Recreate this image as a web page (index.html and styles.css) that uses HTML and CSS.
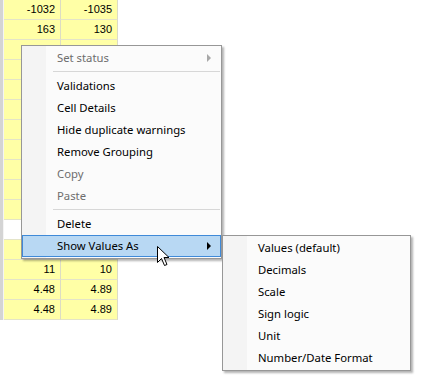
FILE: index.html
```html
<!DOCTYPE html>
<html lang="en">
<head>
<meta charset="UTF-8">
<title>Show Values As</title>
<link rel="stylesheet" href="styles.css">
</head>
<body>
    <div class="sheet">
        <div class="row-strip"></div>
        <div class="grid">
            <div class="cell">-1032</div><div class="cell">-1035</div>
            <div class="cell">163</div><div class="cell">130</div>
            <div class="cell"></div><div class="cell"></div>
            <div class="cell"></div><div class="cell"></div>
            <div class="cell"></div><div class="cell"></div>
            <div class="cell"></div><div class="cell"></div>
            <div class="cell"></div><div class="cell"></div>
            <div class="cell"></div><div class="cell"></div>
            <div class="cell"></div><div class="cell"></div>
            <div class="cell"></div><div class="cell"></div>
            <div class="cell"></div><div class="cell"></div>
            <div class="cell empty"></div><div class="cell empty"></div>
            <div class="cell"></div><div class="cell"></div>
            <div class="cell">11</div><div class="cell">10</div>
            <div class="cell">4.48</div><div class="cell">4.89</div>
            <div class="cell">4.48</div><div class="cell">4.89</div>
        </div>
    </div>

    <!-- context menu -->
    <div class="menu main-menu">
        <div class="item disabled">Set status <span class="arrow"></span></div>
        <div class="sep"></div>
        <div class="item">Validations</div>
        <div class="item">Cell Details</div>
        <div class="item">Hide duplicate warnings</div>
        <div class="item">Remove Grouping</div>
        <div class="item disabled">Copy</div>
        <div class="item disabled">Paste</div>
        <div class="sep"></div>
        <div class="item">Delete</div>
        <div class="item active">Show Values As <span class="arrow"></span></div>
    </div>

    <div class="menu sub-menu">
        <div class="item">Values (default)</div>
        <div class="item">Decimals</div>
        <div class="item">Scale</div>
        <div class="item">Sign logic</div>
        <div class="item">Unit</div>
        <div class="item">Number/Date Format</div>
    </div>

    <svg class="cursor" width="13" height="21" viewBox="0 0 13 21">
        <path d="M0.5 0.5 L0.5 16.5 L4.5 12.5 L7.5 19.5 L10 18.5 L7 11.5 L12 11.5 Z" fill="#fff" stroke="#000" stroke-width="1"/>
    </svg>
</body>
</html>
```

FILE: styles.css
```css
body {
    margin: 0;
    background: #fff;
    font-family: 'Noto Sans', sans-serif;
    font-size: 11.3px;
    color: #000;
    width: 422px;
    height: 389px;
    overflow: hidden;
    position: relative;
}

.sheet {
    display: flex;
    align-items: flex-start;
}

.row-strip {
    width: 3px;
    height: 320px;
    background-color: #d4d4d4;
    border-right: 1px solid #f4f4f4;
}

.grid {
    display: grid;
    grid-template-columns: 57px 57px;
    grid-auto-rows: 20px;
}

.cell {
    background-color: #ffffa6;
    border-right: 1px solid #dcdcc4;
    border-bottom: 1px solid #e4e4c8;
    font-family: 'Liberation Sans', Arial, sans-serif;
    font-size: 11px;
    text-align: right;
    padding-right: 5px;
    line-height: 19px;
}

.cell.empty {
    background-color: #fff;
}

/* menus */
.menu {
    position: absolute;
    background-color: #fbfbfb;
    border: 1px solid #979797;
    box-shadow: 2px 2px 2px rgba(0, 0, 0, 0.3);
    padding: 1px 0;
    background-image: linear-gradient(to right, #f4f4f4 0, #f4f4f4 24px, transparent 24px);
}

.main-menu {
    left: 21px;
    top: 45px;
    width: 199px;
}

.sub-menu {
    left: 222px;
    top: 235px;
    width: 187px;
}

.item {
    height: 22px;
    line-height: 22px;
    padding-left: 35px;
    position: relative;
    white-space: nowrap;
}

.item.disabled {
    color: #6d6d6d;
}

.item.active {
    background-color: #b8d8f3;
    outline: 1px solid #3f8ad8;
    outline-offset: -1px;
}

.sep {
    height: 1px;
    background-color: #d7d7d7;
    margin: 2px 1px 3px 31px;
}

.arrow {
    position: absolute;
    right: 10px;
    top: 7px;
    width: 0;
    height: 0;
    border-top: 4px solid transparent;
    border-bottom: 4px solid transparent;
    border-left: 4px solid #000;
}

.item.disabled .arrow {
    border-left-color: #a8a8a8;
}

.cursor {
    position: absolute;
    left: 157px;
    top: 246px;
}
```
